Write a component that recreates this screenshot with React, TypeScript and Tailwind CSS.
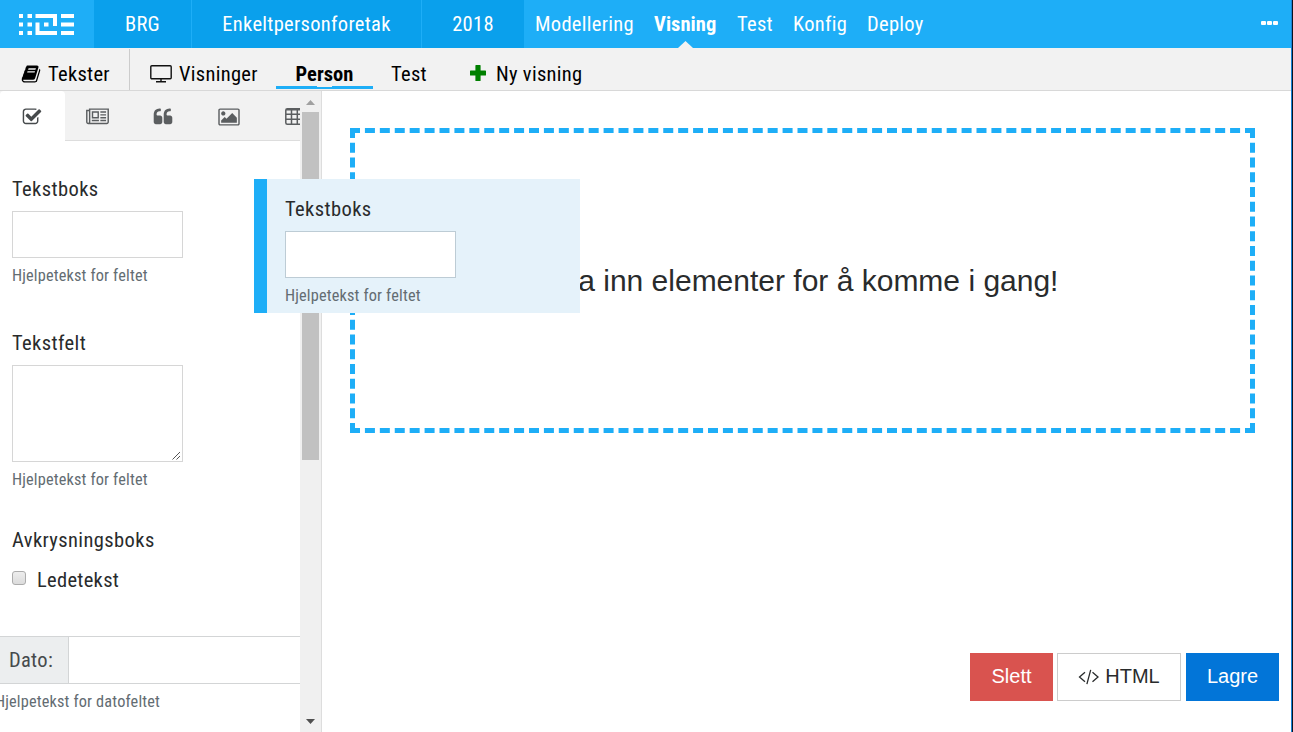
import React from "react";

const FONT = "font-['Roboto_Condensed','Roboto',sans-serif] [font-stretch:75%]";
const SMALL = "text-[16.3px] leading-5 tracking-[0.16px]";
const LABEL = "tracking-[0.4px]";
const BOLD = "font-bold tracking-[0.05px]";
const ARIAL = "font-['Liberation_Sans',sans-serif] text-[20px] tracking-normal";

function Icon({ d, box = "0 0 1792 1792", className }: { d: string; box?: string; className: string }) {
  return (
    <svg viewBox={box} fill="currentColor" className={className}>
      <path d={d} />
    </svg>
  );
}

const BOOK =
  "M1703 478q40 57 18 129l-275 906q-19 64-76.5 107.5t-122.5 43.5h-923q-77 0-148.5-53.5t-99.5-131.5q-24-67-2-127 0-4 3-27t4-37q1-8-3-21.5t-3-19.5q2-11 8-21t16.5-23.5 16.5-23.5q23-38 45-91.5t30-91.5q3-10 .5-30t-.5-28q3-11 17-28t17-23q21-36 42-92t25-90q1-9-2.5-32t.5-28q4-13 22-30.5t22-22.5q19-26 42.5-84.5t27.5-96.5q1-8-3-25.5t-2-26.5q2-8 9-18t18-23 17-21q8-12 16.5-30.5t15-35 16-36 19.5-32 26.5-23.5 36-11.5 47.5 5.5l-1 3q38-9 51-9h761q74 0 114 56t18 130l-274 906q-36 119-71.5 153.5t-128.5 34.5h-869q-27 0-38 15-11 16-1 43 24 70 144 70h923q29 0 56-15.5t35-41.5l300-987q7-22 5-57 38 15 59 43zm-1064 2q-4 13 2 22.5t20 9.5h608q13 0 25.5-9.5t16.5-22.5l21-64q4-13-2-22.5t-20-9.5h-608q-13 0-25.5 9.5t-16.5 22.5zm-83 256q-4 13 2 22.5t20 9.5h608q13 0 25.5-9.5t16.5-22.5l21-64q4-13-2-22.5t-20-9.5h-608q-13 0-25.5 9.5t-16.5 22.5z";
const CHECK =
  "M1472 930v318q0 119-84.5 203.5t-203.5 84.5h-832q-119 0-203.5-84.5t-84.5-203.5v-832q0-119 84.5-203.5t203.5-84.5h832q63 0 117 25 15 7 18 23 3 17-9 29l-49 49q-10 10-23 10-3 0-9-2-23-6-45-6h-832q-66 0-113 47t-47 113v832q0 66 47 113t113 47h832q66 0 113-47t47-113v-254q0-13 9-22l64-64q10-10 23-10 6 0 12 3 20 8 20 29zm231-489l-814 814q-24 24-57 24t-57-24l-430-430q-24-24-24-57t24-57l110-110q24-24 57-24t57 24l263 263 647-647q24-24 57-24t57 24l110 110q24 24 24 57t-24 57z";
const NEWS =
  "M1024 512h-384v384h384v-384zm128 640v128h-640v-128h640zm0-768v640h-640v-640h640zm640 768v128h-512v-128h512zm0-256v128h-512v-128h512zm0-256v128h-512v-128h512zm0-256v128h-512v-128h512zm-1536 960v-960h-128v960q0 26 19 45t45 19 45-19 19-45zm1664 0v-1088h-1536v1088q0 33-11 64h1483q26 0 45-19t19-45zm128-1216v1216q0 80-56 136t-136 56h-1664q-80 0-136-56t-56-136v-1088h256v-128h1792z";
const QUOTE =
  "M832 960v384q0 80-56 136t-136 56h-384q-80 0-136-56t-56-136v-704q0-104 40.5-198.5t109.5-163.5 163.5-109.5 198.5-40.5h64q26 0 45 19t19 45v128q0 26-19 45t-45 19h-64q-106 0-181 75t-75 181v32q0 40 28 68t68 28h224q80 0 136 56t56 136zm896 0v384q0 80-56 136t-136 56h-384q-80 0-136-56t-56-136v-704q0-104 40.5-198.5t109.5-163.5 163.5-109.5 198.5-40.5h64q26 0 45 19t19 45v128q0 26-19 45t-45 19h-64q-106 0-181 75t-75 181v32q0 40 28 68t68 28h224q80 0 136 56t56 136z";
const PICTURE =
  "M640 576q0 80-56 136t-136 56-136-56-56-136 56-136 136-56 136 56 56 136zm1024 384v448h-1408v-192l320-320 160 160 512-512zm96-704h-1600q-13 0-22.5 9.5t-9.5 22.5v1216q0 13 9.5 22.5t22.5 9.5h1600q13 0 22.5-9.5t9.5-22.5v-1216q0-13-9.5-22.5t-22.5-9.5zm160 32v1216q0 66-47 113t-113 47h-1600q-66 0-113-47t-47-113v-1216q0-66 47-113t113-47h1600q66 0 113 47t47 113z";

function Logo() {
  return (
    <svg width="56" height="22" viewBox="0 0 56 22" fill="#fff">
      {[0, 8.5, 17].map((y) => (
        <React.Fragment key={y}>
          <rect x="0" y={y} width="4" height="4" />
          <rect x="8.5" y={y} width="4.5" height="4" />
          <rect x="42" y={y} width="13" height="4" />
        </React.Fragment>
      ))}
      <path d="M16.5 0H38v12h-4V4H16.5zM16.5 8.500H20.500V17H38v4H16.500z" />
      <rect x="25" y="8.500" width="4.500" height="4" />
    </svg>
  );
}

function TextField({ label, area = false, tint = false }: { label: string; area?: boolean; tint?: boolean }) {
  return (
    <div>
      <div className={`h-6 text-[#292b2c] ${LABEL}`}>{label}</div>
      <div
        className={`mt-[10px] flex w-[171px] items-end justify-end border bg-white ${area ? "h-[97px]" : "h-[47px]"} ${
          tint ? "border-[#bdccd5]" : "border-[#d6d6d6]"
        }`}
      >
        {area && (
          <svg width="10" height="10" viewBox="0 0 10 10" stroke="#555" strokeWidth="1">
            <path d="M0.500 8.500 8 1M4.500 8.500 8 5" />
          </svg>
        )}
      </div>
      <div className={`mt-2 h-5 text-[#636c72] ${SMALL}`}>Hjelpetekst for feltet</div>
    </div>
  );
}

export default function App() {
  return (
    <div className={`relative flex h-[732px] w-[1293px] overflow-hidden bg-white text-[20.5px] leading-6 tracking-[0.3px] ${FONT}`}>
      <div className="flex w-[1291px] flex-col">
        <header className="flex h-12 shrink-0 items-stretch bg-[#1eaef7] text-white">
          <div className="flex w-[94px] items-start pl-[19px] pt-[14px]">
            <Logo />
          </div>
          <div className="flex w-[98px] items-center justify-center border-r border-[#1eaef7] bg-[#0aa0ec]">BRG</div>
          <div className="flex w-[230px] items-center justify-center border-r border-[#1eaef7] bg-[#0aa0ec]">Enkeltpersonforetak</div>
          <div className="flex w-[102px] items-center justify-center bg-[#0aa0ec]">2018</div>
          <nav className="flex flex-1 items-center pl-[11px]">
            <span className="w-[119px]">Modellering</span>
            <span className={`relative flex h-12 w-[83px] items-center ${BOLD}`}>
              Visning
              <svg className="absolute bottom-0 left-[24px]" width="15" height="7" viewBox="0 0 15 7" fill="#f2f2f2">
                <path d="M0 7 7.500 0 15 7z" />
              </svg>
            </span>
            <span className="w-[56px]">Test</span>
            <span className="w-[74px]">Konfig</span>
            <span>Deploy</span>
          </nav>
          <div className="flex gap-[1px] pr-[13px] pt-[21px]">
            <i className="h-[4px] w-[5px] rounded-[1px] bg-white" />
            <i className="h-[4px] w-[5px] rounded-[1px] bg-white" />
            <i className="h-[4px] w-[5px] rounded-[1px] bg-white" />
          </div>
        </header>

        <div className="flex h-[43px] shrink-0 border-b border-[#d8d8d8] bg-[#f2f2f2] pt-px text-black">
          <div className="flex h-[41px] w-[130px] items-center border-r border-[#ccc] pl-[21px] pt-[9px]">
            <Icon d={BOOK} className="mb-[1px] mr-[7px] size-5" />
            <span>Tekster</span>
          </div>
          <div className="flex h-[41px] w-[146px] items-center pl-[20px] pt-[9px]">
            <svg className="mr-[7px]" width="22" height="18" viewBox="0 0 22 18" fill="none" stroke="#111" strokeWidth="1.400">
              <rect x="0.800" y="0.800" width="20.400" height="13" rx="1" />
              <path d="M11 14v2.500M6 16.800h10" />
            </svg>
            <span>Visninger</span>
          </div>
          <div className={`relative flex h-[40px] w-[97px] items-center justify-center border-b-[3px] border-[#1eaef7] pt-[13px] ${BOLD}`}>
            Person
            <i className="absolute -bottom-px left-[41px] h-px w-[15px] bg-[#f2f2f2]" />
          </div>
          <div className="flex h-[41px] w-[97px] items-center pl-[18px] pt-[9px]">Test</div>
          <div className="flex h-[41px] items-center pt-[9px]">
            <svg className="mb-[2px] mr-[10px]" width="16" height="16" viewBox="0 0 16 16" fill="#008000">
              <path d="M6 0h4q.6 0 .6.6V5.400h4.800q.6 0 .6.6v4q0 .6-.6.6H10.600v4.800q0 .6-.6.6H6q-.6 0-.6-.6V10.600H.6Q0 10.600 0 10V6q0-.6.6-.6H5.400V.6Q5.400 0 6 0z" />
            </svg>
            Ny visning
          </div>
        </div>

        <div className="flex h-[641px]">
          <aside className="flex w-[322px] border-r border-[#ddd]">
            <div className="w-[300px] overflow-hidden">
              <div className="flex h-[50px] bg-[#f2f2f2] text-[#5b5e60]">
                <div className="w-[65px] shrink-0 rounded-t-[4px] bg-white pl-[22px] pt-4 text-[#464a4c]">
                  <Icon d={CHECK} className="size-5" />
                </div>
                <div className="flex w-[235px] shrink-0 overflow-hidden border-b border-[#ddd] pl-[21px] pt-4">
                  <Icon d={NEWS} box="0 0 2048 1792" className="h-5 w-[23px] shrink-0" />
                  <Icon d={QUOTE} className="ml-[44px] size-5 shrink-0" />
                  <Icon d={PICTURE} box="0 0 1920 1792" className="ml-[45px] h-5 w-[22px] shrink-0" />
                  <svg className="ml-[45px] mt-[1px] shrink-0" width="19" height="17" viewBox="0 0 19 17" fill="none" stroke="currentColor" strokeWidth="1.500">
                    <rect x="0.800" y="0.800" width="17.400" height="15.400" rx="1.500" />
                    <path d="M1 1.800H18M1 6.200H18M1 11.200H18M6.500 1V16M12.300 1V16" />
                  </svg>
                </div>
              </div>
              <div className="pl-3 pt-9">
                <TextField label="Tekstboks" />
                <div className="h-[45px]" />
                <TextField label="Tekstfelt" area />
                <div className={`mt-[38px] text-[#292b2c] ${LABEL}`}>Avkrysningsboks</div>
                <div className="mt-4 flex text-[#292b2c]">
                  <i className="mr-[11px] mt-[3px] size-[14px] rounded-[3px] border border-[#acacac] bg-gradient-to-b from-[#ededed] to-[#dcdcdc]" />
                  Ledetekst
                </div>
              </div>
              <div className="mt-[44px] flex h-12 border-y border-[#d3d5d6]">
                <div className="flex w-[69px] items-center border-r border-[#d3d5d6] bg-[#eceeef] pl-[9px] text-[#464a4c]">
                  Dato:
                </div>
              </div>
              <div className={`-ml-[5px] mt-2 text-[#636c72] ${SMALL}`}>Hjelpetekst for datofeltet</div>
            </div>
            <div className="flex w-[21px] flex-col items-center bg-[#f0f0f0]">
              <svg className="mt-[9px]" width="9" height="5" viewBox="0 0 9 5" fill="#a0a0a0">
                <path d="M0 5 4.500 0 9 5z" />
              </svg>
              <div className="mt-[7px] h-[348px] w-[17px] bg-[#c1c1c1]" />
              <svg className="mt-auto mb-[8px]" width="9" height="5" viewBox="0 0 9 5" fill="#505050">
                <path d="M0 0 4.500 5 9 0z" />
              </svg>
            </div>
          </aside>

          <main className="flex flex-1 flex-col items-end">
            <div className="mr-9 mt-[37px] flex h-[305px] w-[905px] items-center justify-center border-[5px] border-dashed border-[#1eaef7] font-['Liberation_Sans',sans-serif] text-[30px] leading-9 tracking-normal text-[#292b2c]">
              Dra inn elementer for å komme i gang!
            </div>
            <div className={`mb-[31px] mr-3 mt-auto flex h-12 ${ARIAL}`}>
              <div className="flex w-[83px] items-center justify-center bg-[#d9534f] pb-[2px] text-white">Slett</div>
              <div className="ml-1 flex w-[124px] items-center justify-center border border-[#ccc] pb-[2px] text-[#292b2c]">
                <svg className="mr-[6px] mt-[1px]" width="21" height="16" viewBox="0 0 21 16" fill="none" stroke="currentColor" strokeWidth="1.300">
                  <path d="M7 3.200 1.500 8l5.500 4.800M14.500 3.200 20 8l-5.500 4.800M12.700.8l-3.800 14.400" />
                </svg>
                HTML
              </div>
              <div className="ml-[5px] flex w-[93px] items-center justify-center bg-[#0275d8] pb-[2px] text-white">Lagre</div>
            </div>
          </main>
        </div>
      </div>
      <div className="w-[2px] border-l border-[#1883d7] bg-[#0a1420]" />

      <div className="absolute left-[254px] top-[179px] h-[134px] w-[326px] border-l-[13px] border-[#1eaef7] bg-[#e5f2fa] pl-[18px] pt-[18px]">
        <TextField label="Tekstboks" tint />
      </div>
    </div>
  );
}
